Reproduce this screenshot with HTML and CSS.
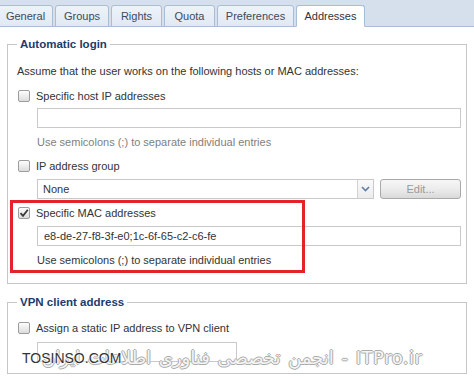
FILE: index.html
```html
<!DOCTYPE html>
<html>
<head>
<meta charset="utf-8">
<link rel="stylesheet" href="styles.css">
</head>
<body>
<div class="window">
  <div class="tabbar">
    <div class="tab first">General</div>
    <div class="tab">Groups</div>
    <div class="tab">Rights</div>
    <div class="tab">Quota</div>
    <div class="tab">Preferences</div>
    <div class="tab active">Addresses</div>
  </div>
  <div class="content">
    <fieldset class="group g1">
      <legend>Automatic login</legend>
      <div class="intro">Assume that the user works on the following hosts or MAC addresses:</div>
      <div class="check-row r1"><span class="cb"></span><span>Specific host IP addresses</span></div>
      <div class="field disabled"></div>
      <div class="hint disabled-text">Use semicolons (;) to separate individual entries</div>
      <div class="check-row r2"><span class="cb"></span><span>IP address group</span></div>
      <div class="select-row">
        <div class="select"><span class="select-text">None</span><span class="select-btn"><svg width="9" height="6" viewBox="0 0 9 6"><path d="M1 1 L4.5 4.5 L8 1" fill="none" stroke="#5f7ea8" stroke-width="1.6"/></svg></span></div>
        <div class="btn">Edit...</div>
      </div>
      <div class="mac">
        <div class="check-row r3"><span class="cb checked"><svg width="10" height="10" viewBox="0 0 10 10"><path d="M1.5 5.2 L4 7.8 L8.8 1.8" fill="none" stroke="#3a3a3a" stroke-width="1.8"/></svg></span><span>Specific MAC addresses</span></div>
        <div class="field value">e8-de-27-f8-3f-e0;1c-6f-65-c2-c6-fe</div>
        <div class="hint">Use semicolons (;) to separate individual entries</div>
        <div class="highlight"></div>
      </div>
    </fieldset>
    <fieldset class="group g2">
      <legend>VPN client address</legend>
      <div class="check-row r4"><span class="cb"></span><span>Assign a static IP address to VPN client</span></div>
      <div class="field short disabled"></div>
    </fieldset>
  </div>
  <div class="wm-forum" dir="ltr">انجمن تخصصی فناوری اطلاعات ایران - ITPro.ir</div>
  <div class="wm-site">TOSINSO.COM</div>
</div>
</body>
</html>
```
FILE: styles.css
```css
* { box-sizing: border-box; }
html, body { margin: 0; padding: 0; background: #fff; }
body { font-family: "Liberation Sans", Arial, sans-serif; font-size: 11px; color: #333; }
.window { position: relative; width: 474px; height: 379px; overflow: hidden; background: #fff; }

.tabbar {
  display: flex; align-items: flex-end; gap: 2px;
  height: 27px; background: #d5e0ec; border-bottom: 1px solid #a9bdd4;
}
.tab {
  height: 22px; margin-bottom: -1px; padding: 0 8px;
  display: flex; align-items: center; justify-content: center;
  border: 1px solid #a9bdd4; border-bottom: 1px solid #a9bdd4; border-radius: 3px 3px 0 0;
  background: linear-gradient(#eef3f9, #e0e9f3);
  color: #3b4a5c; font-size: 11px;
}
.tab.first { margin-left: -2px; width: 55px; }
.tab:nth-child(2) { width: 54px; }
.tab:nth-child(3) { width: 51px; }
.tab:nth-child(4) { width: 51px; }
.tab:nth-child(5) { width: 77px; }
.tab.active { width: 69px; background: #fff; border-bottom-color: #fff; color: #333; }

.content { padding: 9px 7px 0 7px; }
.group {
  margin: 0; min-width: 0; width: 460px;
  border: 1px solid #c6c6c6; padding: 0 4px 15px 9px;
}
.group legend {
  padding: 0 3px; margin-left: 0; line-height: 16px;
  font-weight: bold; font-size: 11.5px; color: #1d3b6b;
}
.g2 { margin-top: 10px; padding-bottom: 11px; }

.intro { line-height: 16px; margin-top: 11px; }
.check-row { display: flex; align-items: center; gap: 6px; height: 16px; margin-left: 1px; }
.r1 { margin-top: 9px; }
.r2 { margin-top: 8px; }
.r3 { margin-top: 6px; }
.r4 { margin-top: 10px; }
.cb {
  width: 12px; height: 12px; border: 1px solid #9d9d9d; border-radius: 2px;
  background: linear-gradient(#fdfdfd, #dcdcdc);
  display: flex; align-items: center; justify-content: center; flex: none;
}
.field {
  margin-top: 4px; margin-left: 20px; height: 20px; width: 424px;
  border: 1px solid #c9c9c9; background: #fff;
  padding: 0 6px; line-height: 18px;
}
.field.value { margin-top: 5px; color: #333; }
.field.short { width: 200px; margin-top: 6px; }
.hint { margin-left: 20px; margin-top: 6px; line-height: 16px; }
.disabled-text { color: #808080; }

.select-row { display: flex; gap: 6px; margin-top: 5px; margin-left: 20px; height: 20px; }
.select {
  width: 337px; height: 20px; border: 1px solid #c9c9c9; display: flex; align-items: stretch;
}
.select-text { flex: 1; padding-left: 5px; line-height: 18px; }
.select-btn {
  width: 16px; border-left: 1px solid #d2d2d2; background: linear-gradient(#fafafa, #ececec);
  display: flex; align-items: center; justify-content: center;
}
.btn {
  width: 81px; height: 20px; border: 1px solid #a9a9a9; border-radius: 3px;
  background: linear-gradient(#f6f6f6 0%, #ececec 50%, #d9d9d9 100%);
  color: #9a9a9a; display: flex; align-items: center; justify-content: center;
}

.mac { position: relative; }
.highlight {
  position: absolute; left: -7px; top: -5px; width: 295px; height: 73px;
  border: 3px solid #e3222b; pointer-events: none;
}

.wm-forum {
  position: absolute; left: 42px; top: 347px; white-space: nowrap;
  font-family: "DejaVu Sans", sans-serif; font-size: 18px; letter-spacing: 0.5px; word-spacing: 2px;
  color: #f4f4f4;
  text-shadow: 1px 0 0 #aaa, -1px 0 0 #aaa, 0 1px 0 #aaa, 0 -1px 0 #aaa;
}
.wm-site {
  position: absolute; left: 22px; top: 350px;
  font-size: 14px; color: #333; letter-spacing: 0;
  text-shadow: 0 0 2px #fff, 0 0 2px #fff, 0 0 1px #fff;
}
```
